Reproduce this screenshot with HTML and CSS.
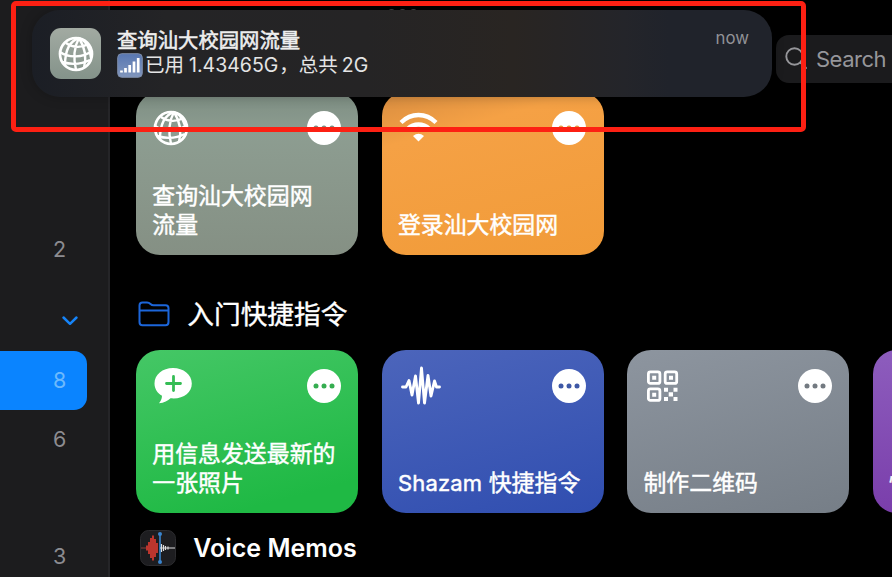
FILE: index.html
```html
<!DOCTYPE html>
<html lang="zh-CN">
<head>
<meta charset="utf-8">
<title>快捷指令</title>
<link rel="stylesheet" href="styles.css">
</head>
<body>
<svg width="0" height="0" class="defs">
  <defs>
    <symbol id="globe" viewBox="0 0 36 36">
      <g fill="none" stroke="#fff" stroke-width="2.4">
        <circle cx="18" cy="18" r="16" stroke-width="2.7"/>
        <path d="M21 2C12 5 7 13 7 29M21 2C16 11 15 21 18 34M21 2C26 10 29 21 26 32M21 2C28 5 32 11 33 22M8 7C15 12 24 12 30 8M2 16C10 22 25 22 34 15M4 26C14 29 24 28 32 24"/>
      </g>
    </symbol>
    <symbol id="more" viewBox="0 0 34 34">
      <circle cx="17" cy="17" r="17" fill="#fff"/>
      <g fill="currentColor"><circle cx="9" cy="17" r="2.5"/><circle cx="17" cy="17" r="2.5"/><circle cx="25" cy="17" r="2.5"/></g>
    </symbol>
  </defs>
</svg>
<div class="app">
  <aside class="sidebar">
    <div class="row">2</div>
    <div class="row chevron"><svg width="18" height="12" viewBox="0 0 18 12"><path d="M2.500 2.500 9 8.800 15.500 2.500" fill="none" stroke="#1684f8" stroke-width="2.500" stroke-linecap="round" stroke-linejoin="round"/></svg></div>
    <div class="row selected">8</div>
    <div class="row">6</div>
    <div class="row last">3</div>
  </aside>
  <main class="content">
    <div class="cards">
      <article class="card sage">
        <div class="top"><svg class="ico globe"><use href="#globe"/></svg><svg class="more"><use href="#more"/></svg></div>
        <p>查询汕大校园网<br>流量</p>
      </article>
      <article class="card orange">
        <div class="top"><svg class="ico" viewBox="0 0 40 40"><g fill="none" stroke="#fff" stroke-width="4.300"><path d="M2 14.500C12 4.500 27 4.500 37 14.500"/><path d="M8.500 21C15 15 24 15 30.500 21"/></g><path d="M14 28Q19.500 23.500 25 28L19.500 33.500Z" fill="#fff"/></svg><svg class="more"><use href="#more"/></svg></div>
        <p>登录汕大校园网</p>
      </article>
    </div>
    <h2 class="folder"><svg width="32" height="26" viewBox="0 0 32 26"><path d="M1.500 21V4.500Q1.500 1.500 4.500 1.500H9Q11 1.500 12.500 3T16 4.300H27.500Q30.500 4.300 30.500 7.300V21Q30.500 24.300 27.500 24.300H4.500Q1.500 24.300 1.500 21ZM1.500 9.500H30.500" fill="none" stroke="#1c66da" stroke-width="2"/></svg><span>入门快捷指令</span></h2>
    <div class="cards">
      <article class="card green">
        <div class="top"><svg class="ico" viewBox="0 0 40 40"><path d="M21 2C10.500 2 2.500 8.500 2.500 17.500C2.500 23 5.500 27 10 29.800C10 33 8.500 35.500 7 37.300C12 37 16 34.500 18.500 32.300C31 33.500 39.800 27 39.800 17.500C39.800 8.500 31.500 2 21 2Z" fill="#fff"/><path d="M21.500 10.500V24.500M14.500 17.500H28.500" stroke="#35bd55" stroke-width="2.800" stroke-linecap="round"/></svg><svg class="more"><use href="#more"/></svg></div>
        <p>用信息发送最新的<br>一张照片</p>
      </article>
      <article class="card blue">
        <div class="top"><svg class="ico" viewBox="0 0 40 40"><path d="M1.500 21H5L8 14.500 11 29 14.500 10 17.500 37 20.500 2 23.500 37 27 9.500 30 30 33.500 15 35.500 21H38.500" fill="none" stroke="#fff" stroke-width="2.900" stroke-linecap="round" stroke-linejoin="round"/></svg><svg class="more"><use href="#more"/></svg></div>
        <p class="latin">Shazam <span>快捷指令</span></p>
      </article>
      <article class="card gray">
        <div class="top"><svg class="ico" viewBox="0 0 40 40"><g fill="none" stroke="#fff" stroke-width="2.800"><rect x="5.400" y="5.900" width="11.500" height="11.500" rx="2"/><rect x="22.200" y="5.900" width="11.500" height="11.500" rx="2"/><rect x="5.400" y="22.900" width="11.500" height="11.500" rx="2"/></g><path fill="#fff" d="M9.200 9.700h4v4h-4zM26 9.700h4v4h-4zM9.200 26.700h4v4h-4zM21 21.800h4v4h-4zM30.500 21.800h4v4h-4zM25.700 26.200h4.300v4.300h-4.300zM21 31h4v4h-4zM30.500 31h4v4h-4z"/></svg><svg class="more"><use href="#more"/></svg></div>
        <p>制作二维码</p>
      </article>
      <article class="card purple"><p>快捷</p></article>
    </div>
    <h2 class="memos"><svg width="36" height="36" viewBox="0 0 36 36"><rect x=".5" y=".5" width="35" height="35" rx="8" fill="#1d1d20" stroke="#2b2b2e"/><path d="M1 18H6" stroke="#8d3e3a" stroke-width="1"/><path d="M7 15.500V20.500M9 12V24M11 8V28M13 5.500V30.500M15 9V27M17 13V23" stroke="#d93a31" stroke-width="1.700"/><path d="M20 3V33" stroke="#3984cd" stroke-width="1.600"/><circle cx="20" cy="4" r="2" fill="#3984cd"/><circle cx="20" cy="32" r="2" fill="#3984cd"/><path d="M20 18H35" stroke="#ddd"/><path d="M21.500 14V22M23.500 15V21M25.500 16V20M28 16.500V19.500" stroke="#ddd" stroke-width="1.200"/></svg><span>Voice Memos</span></h2>
  </main>
  <div class="search"><svg width="24" height="25" viewBox="0 0 24 25"><circle cx="9.500" cy="9.500" r="8.200" fill="none" stroke="#96969a" stroke-width="1.900"/><path d="M15.500 15.500 21 21" stroke="#96969a" stroke-width="2" stroke-linecap="round"/></svg><span>Search</span></div>
  <div class="grabber"><i></i><i></i><i></i></div>
  <section class="notice">
    <div class="app-icon"><svg><use href="#globe"/></svg></div>
    <div class="message">
      <strong>查询汕大校园网流量</strong>
      <div class="detail"><svg width="26" height="25" viewBox="0 0 26 25"><defs><linearGradient id="signal" x2="0" y2="1"><stop stop-color="#5877b2"/><stop offset="1" stop-color="#8196bd"/></linearGradient></defs><rect x=".7" y=".7" width="24.600" height="23.600" rx="4" fill="url(#signal)" stroke="#7d8ca8"/><path d="M4.500 17.500V19.500M8.500 15V19.500M12.700 12V19.500M17 8.500V19.500M21.200 5V19.500" stroke="#fff" stroke-width="2.700"/></svg><span class="used">已用</span><span class="amount">1.43465G</span><span class="total">，总共</span><span class="amount">2G</span></div>
    </div>
    <time>now</time>
  </section>
  <div class="highlight"></div>
</div>
</body>
</html>
```

FILE: styles.css
```css
* { box-sizing: border-box; }
body { margin: 0; background: #000; color: #fff; font-family: Inter, "Noto Sans CJK SC", sans-serif; }
.defs { position: absolute; }
svg { display: block; flex: none; }
.app { position: relative; display: flex; width: 892px; height: 577px; overflow: hidden; }
.sidebar { flex: none; width: 110px; height: 577px; padding-top: 220px; background: #1c1c1e; border-right: 2px solid #252528; }
.row { display: flex; align-items: center; height: 59px; width: 87px; padding: 0 0 1px 53px; font-size: 21.500px; color: #8c8c91; }
.chevron { height: 72px; padding: 12px 0 0 61px; }
.selected { background: #0a84ff; color: #6db9fc; border-radius: 0 13px 13px 0; }
.last { margin-top: 58px; }
.content { flex: none; width: 1000px; padding: 92px 0 0 26.300px; }
.cards { display: flex; gap: 23.600px; }
.card { display: flex; flex-direction: column; justify-content: space-between; flex: none; width: 222px; height: 162.500px; padding: 16px 17.500px 14px 16px; border-radius: 24px; overflow: hidden; }
.top { display: flex; justify-content: space-between; }
.ico { width: 40px; height: 40px; margin-left: 3px; }
.card .globe { width: 36px; height: 36px; margin-left: 1px; margin-top: 2px; }
.green .ico { margin-left: 0; }
.gray .ico { margin-left: 0; }
.more { width: 34px; height: 34px; margin-top: 3px; }
.orange .ico { margin-left: 1px; }
.card p { margin: 0; font-size: 22.900px; line-height: 29.500px; white-space: nowrap; color: #fff; -webkit-text-stroke: .45px #fff; }
.card .latin { font-size: 22px; letter-spacing: .2px; }
.latin span { font-size: 22.900px; letter-spacing: 0; }
.sage { background: linear-gradient(#7d8d82, #8d9d91 25%, #859084); color: #7d8d82; }
.orange { background: linear-gradient(165deg, #d78c40, #f5a145 25%, #f19b38); color: #e69a43; }
.green { background: linear-gradient(165deg, #45c766, #1fb944 85%); color: #35ad50; }
.blue { background: linear-gradient(165deg, #4c65bb, #304eb0); color: #3e58a6; }
.gray { background: linear-gradient(165deg, #8d959f, #767e87); color: #737a81; }
.purple { background: linear-gradient(#8d5dbd, #7a3eab); justify-content: flex-end; }
h2 { display: flex; align-items: center; margin: 0; font-weight: 400; }
.folder { height: 95.500px; padding: 24px 0 0 2px; gap: 17px; font-size: 26.700px; -webkit-text-stroke: .4px #fff; }
.folder span { padding-bottom: 3px; }
.memos { height: 71px; padding-left: 4px; gap: 17px; font-size: 25px; font-weight: 600; }
.search { position: absolute; left: 776px; top: 35px; display: flex; align-items: center; gap: 7px; width: 180px; height: 48px; padding-left: 9px; border-radius: 13px; background: #1b1b1d; color: #96969a; font-size: 22px; letter-spacing: -.5px; }
.grabber { position: absolute; left: 388px; top: 8.500px; display: flex; gap: 4px; }
.grabber i { width: 7px; height: 7px; border-radius: 50%; background: #444; }
.notice { position: absolute; left: 32px; top: 10px; display: flex; width: 740px; height: 87px; padding: 18px 23px 0 18px; border-radius: 28px; background: linear-gradient(90deg, #1b1e25, #242426 18%, #252425 45%, #292522 65%, #24252a 80%, #20232b 86%); box-shadow: 0 0 12px rgba(0, 0, 0, .25); }
.app-icon { display: grid; place-items: center; flex: none; width: 51px; height: 51px; border-radius: 11px; background: linear-gradient(#a2aaa2, #84938a); }
.app-icon svg { width: 36px; height: 36px; }
.message { margin-left: 16px; }
.message strong { display: block; height: 25px; line-height: 26px; font-size: 20.350px; font-weight: 400; color: #eee; -webkit-text-stroke: .55px #eee; }
.detail { display: flex; align-items: center; height: 24px; font-size: 19.500px; line-height: 24px; color: #e4e4e5; }
.used { margin-left: 2px; margin-right: 5px; }
.total { margin-left: 1px; margin-right: 4px; }
time { margin-left: auto; font-size: 16.800px; line-height: 21px; color: #929297; }
.highlight { position: absolute; left: 11px; top: 1px; width: 795px; height: 131px; border: 5px solid #fd2013; border-radius: 5px; }
```
